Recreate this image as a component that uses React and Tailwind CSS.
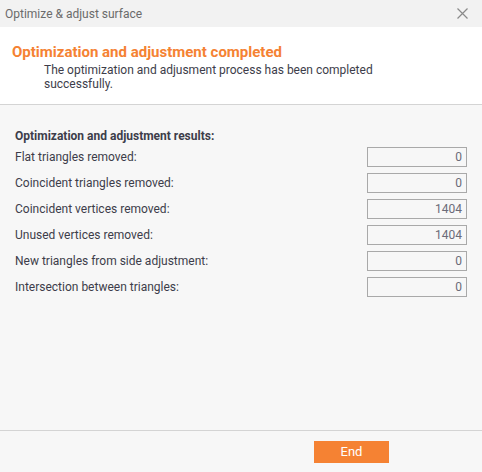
const rows = [
  { label: "Flat triangles removed:", value: "0" },
  { label: "Coincident triangles removed:", value: "0" },
  { label: "Coincident vertices removed:", value: "1404" },
  { label: "Unused vertices removed:", value: "1404" },
  { label: "New triangles from side adjustment:", value: "0" },
  { label: "Intersection between triangles:", value: "0" },
];

export default function App() {
  return (
    <div className="w-[482px] h-[472px] flex flex-col bg-[#f7f7f7] font-['Roboto',sans-serif] text-[#3d3d4a]">
      {/* Title bar */}
      <div className="h-[27px] flex items-center justify-between pl-[5px] pr-[14px] bg-[#f2f2f2]">
        <span className="text-[12px] text-[#6b6b6b]">Optimize &amp; adjust surface</span>
        <svg width="11" height="11" viewBox="0 0 11 11" className="text-[#8a8a8a]">
          <path d="M0.5 0.5 L10.5 10.5 M10.5 0.5 L0.5 10.5" stroke="currentColor" strokeWidth="1.2" />
        </svg>
      </div>

      {/* Header */}
      <div className="h-[78px] bg-white border-b border-[#d4d4d4] pl-[12px] pt-[16px]">
        <h2 className="text-[15px] font-bold text-[#f58233] leading-[18px]">
          Optimization and adjustment completed
        </h2>
        <p className="ml-[32px] w-[345px] text-[12px] leading-[14px] mt-[2px]">
          The optimization and adjusment process has been completed successfully.
        </p>
      </div>

      {/* Body */}
      <div className="flex-1 px-[15px] pt-[22px]">
        <h3 className="text-[12px] font-bold leading-[16px] mt-[1px]">Optimization and adjustment results:</h3>
        <div className="mt-[3px] flex flex-col gap-[6px]">
          {rows.map((r) => (
            <div key={r.label} className="h-[20px] flex items-center justify-between">
              <span className="text-[12px]">{r.label}</span>
              <div className="w-[100px] h-[20px] border border-[#a9a9a9] bg-[#f7f7f7] text-[12px] text-right pr-[4px] leading-[18px] text-[#6b6b78]">
                {r.value}
              </div>
            </div>
          ))}
        </div>
      </div>

      {/* Footer */}
      <div className="h-[42px] border-t border-[#d4d4d4] flex items-center pl-[314px]">
        <button className="w-[75px] h-[22px] bg-[#f58233] text-white text-[13px]">End</button>
      </div>
    </div>
  );
}
